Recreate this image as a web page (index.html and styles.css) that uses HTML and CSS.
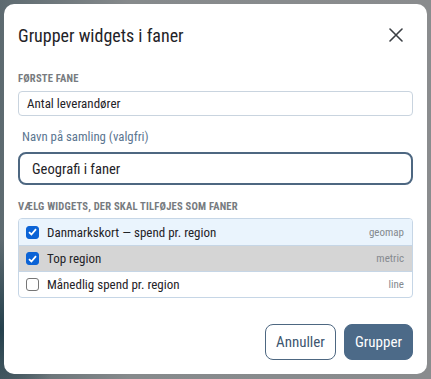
FILE: index.html
```html
<!DOCTYPE html>
<html lang="da">
<head>
    <meta charset="UTF-8">
    <title>Grupper widgets i faner</title>
    <link rel="stylesheet" href="styles.css">
</head>
<body>
    <div class="backdrop">
        <div class="dialog">
            <div class="dialog-header">
                <h2 class="dialog-title">Grupper widgets i faner</h2>
                <button class="close-btn" aria-label="Luk">
                    <svg width="14" height="14" viewBox="0 0 14 14"><path d="M1 1L13 13M13 1L1 13" stroke="#3b3f44" stroke-width="1.6" fill="none" stroke-linecap="round"/></svg>
                </button>
            </div>

            <div class="section-label">Første fane</div>
            <div class="input small-input">Antal leverandører</div>

            <label class="field-label">Navn på samling (valgfri)</label>
            <div class="input big-input">Geografi i faner</div>

            <div class="section-label">Vælg widgets, der skal tilføjes som faner</div>
            <div class="widget-list">
                <div class="widget-row row-selected">
                    <span class="check checked"><svg width="9" height="8" viewBox="0 0 9 8"><path d="M1 4.2L3.4 6.5L8 1.2" stroke="#fff" stroke-width="1.8" fill="none"/></svg></span>
                    <span class="widget-name">Danmarkskort — spend pr. region</span>
                    <span class="widget-type">geomap</span>
                </div>
                <div class="widget-row row-hover">
                    <span class="check checked"><svg width="9" height="8" viewBox="0 0 9 8"><path d="M1 4.2L3.4 6.5L8 1.2" stroke="#fff" stroke-width="1.8" fill="none"/></svg></span>
                    <span class="widget-name">Top region</span>
                    <span class="widget-type">metric</span>
                </div>
                <div class="widget-row">
                    <span class="check"></span>
                    <span class="widget-name">Månedlig spend pr. region</span>
                    <span class="widget-type">line</span>
                </div>
            </div>

            <div class="dialog-actions">
                <button class="btn btn-outline">Annuller</button>
                <button class="btn btn-primary">Grupper</button>
            </div>
        </div>
    </div>
</body>
</html>
```

FILE: styles.css
```css
body {
    margin: 0;
    font-family: "Roboto Condensed", Roboto, sans-serif;
    color: #1f2328;
}
.backdrop {
    width: 431px;
    height: 379px;
    box-sizing: border-box;
    padding: 4px 4px 5px 4px;
    background:
        radial-gradient(ellipse 60px 90px at 0 330px, #24404c 0%, rgba(36,64,76,0) 100%),
        linear-gradient(90deg, #5d6a70 0%, #868a8c 30%, #8a8c8e 100%);
}
.dialog {
    background: #fff;
    border-radius: 10px;
    height: 100%;
    box-sizing: border-box;
    padding: 14px 14px 14px 14px;
}
.dialog-header {
    display: flex;
    align-items: center;
    justify-content: space-between;
    height: 34px;
}
.dialog-title {
    margin: 0;
    font-size: 18px;
    font-weight: 400;
    color: #1f2328;
}
.close-btn {
    background: none;
    border: none;
    padding: 0;
    margin-right: 10px;
    display: flex;
}
.section-label {
    font-size: 10.6px;
    font-weight: 700;
    text-transform: uppercase;
    color: #777b80;
    letter-spacing: 0.2px;
    margin-top: 20px;
}
.input {
    box-sizing: border-box;
    display: flex;
    align-items: center;
}
.small-input {
    margin-top: 6px;
    height: 25px;
    border: 1px solid #c9d4df;
    border-radius: 4px;
    padding: 0 8px;
    font-size: 13px;
}
.field-label {
    display: block;
    margin-top: 13px;
    padding-left: 4px;
    font-size: 12.8px;
    color: #5b7590;
}
.big-input {
    margin-top: 8px;
    height: 33px;
    border: 2px solid #4d6781;
    border-radius: 8px;
    padding: 0 12px;
    font-size: 14.6px;
}
.big-input + .section-label {
    margin-top: 15px;
}
.widget-list {
    margin-top: 5px;
    border: 1px solid #c6d6e6;
    border-radius: 4px;
    overflow: hidden;
}
.widget-row {
    display: flex;
    align-items: center;
    height: 25px;
    padding: 0 8px 0 7px;
    font-size: 13px;
}
.widget-row:first-child {
    height: 26px;
}
.widget-row + .widget-row {
    border-top: 1px solid #c6d6e6;
}
.row-selected {
    background: #eaf4fd;
}
.row-hover {
    background: #d5d5d5;
}
.check {
    width: 13px;
    height: 13px;
    box-sizing: border-box;
    border: 1px solid #767676;
    border-radius: 3px;
    background: #fff;
    margin-right: 8px;
    display: flex;
    align-items: center;
    justify-content: center;
}
.check.checked {
    background: #0b63d6;
    border-color: #0b63d6;
}
.widget-name {
    flex: 1;
}
.widget-type {
    font-size: 11px;
    color: #858a8f;
}
.dialog-actions {
    display: flex;
    justify-content: flex-end;
    gap: 8px;
    margin-top: 26px;
}
.btn {
    font-family: inherit;
    font-size: 15px;
    height: 36px;
    border-radius: 8px;
    padding: 0 10px;
}
.btn-outline {
    background: #fff;
    border: 1px solid #4d6781;
    color: #3d5670;
}
.btn-primary {
    background: #4c6a88;
    border: 1px solid #4c6a88;
    color: #fff;
}
```
